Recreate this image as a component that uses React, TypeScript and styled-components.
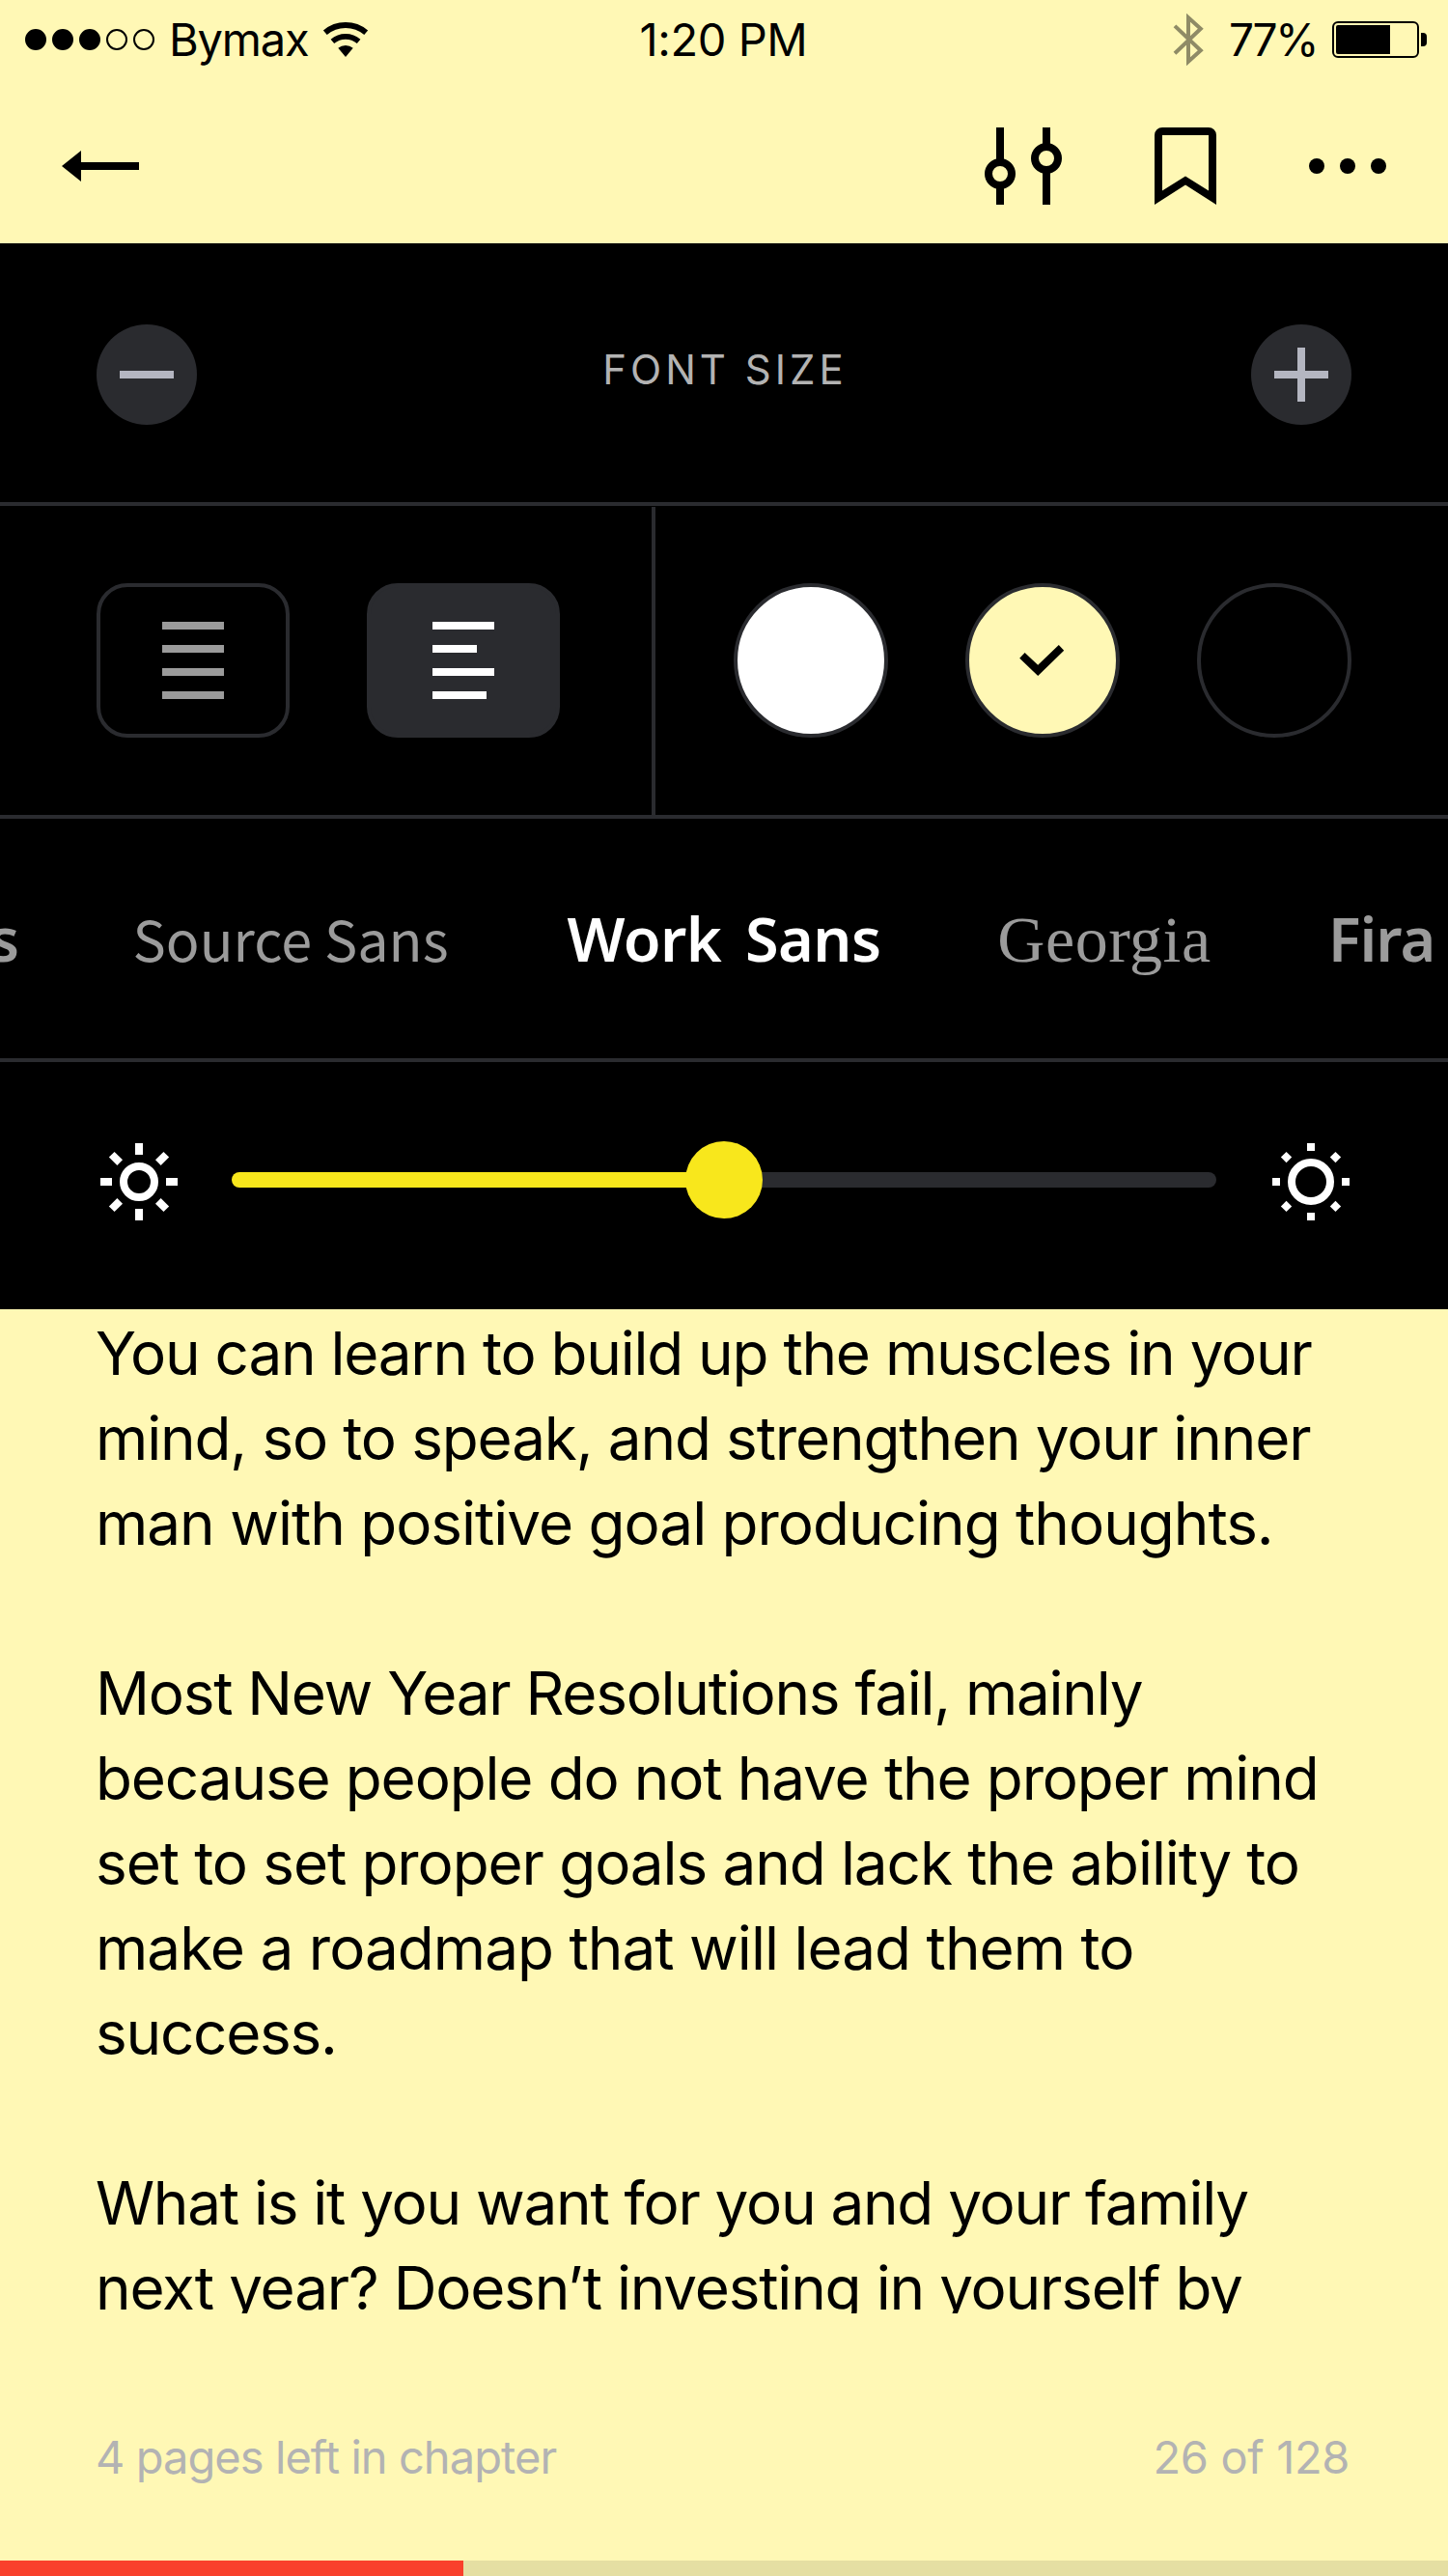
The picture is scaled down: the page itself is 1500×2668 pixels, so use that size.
import React from "react";
import styled, { createGlobalStyle } from "styled-components";

const PAPER = "#fff8b5";
const LINE = "#2a2b2f";
const YELLOW = "#f8e71c";

const GlobalStyle = createGlobalStyle`
  * { box-sizing: border-box; }
  body { margin: 0; background: ${PAPER}; }
  button { appearance: none; border: 0; padding: 0; background: none; color: inherit; font: inherit; }
  svg { display: block; flex: none; }
`;

const Screen = styled.div`
  display: flex;
  flex-direction: column;
  width: 1500px;
  height: 2668px;
  overflow: hidden;
  background: ${PAPER};
  color: #000;
  font-family: Inter, "Liberation Sans", sans-serif;
`;

/* Status bar */

const StatusBar = styled.header`
  display: grid;
  grid-template-columns: 1fr auto 1fr;
  align-items: center;
  height: 82px;
  padding: 0 22px 0 26px;
  font-size: 47px;
  line-height: 60px;
`;

const StatusGroup = styled.div<{ $end?: boolean }>`
  display: flex;
  align-items: center;
  justify-content: ${(p) => (p.$end ? "flex-end" : "flex-start")};
`;

const Signal = styled.div`
  display: flex;
  gap: 6px;
  margin-right: 15px;
`;

const SignalDot = styled.span<{ $on: boolean }>`
  width: 22px;
  height: 22px;
  border: 2px solid #000;
  border-radius: 50%;
  background: ${(p) => (p.$on ? "#000" : "transparent")};
`;

const Carrier = styled.span`
  width: 159px;
  letter-spacing: -1.2px;
`;

const Clock = styled.time`
  padding-right: 5px;
  letter-spacing: -0.4px;
`;

const Percent = styled.span`
  width: 107px;
  margin-left: 24px;
  font-size: 46px;
  letter-spacing: -2.4px;
`;

const Battery = styled.div`
  display: flex;
  align-items: center;
  gap: 2px;
`;

const BatteryCase = styled.div`
  width: 90px;
  height: 38px;
  padding: 2px;
  border: 2px solid #000;
  border-radius: 6px;
`;

const BatteryFill = styled.div`
  width: 56px;
  height: 30px;
  border-radius: 2px 0 0 2px;
  background: #000;
`;

const BatteryCap = styled.div`
  width: 6px;
  height: 14px;
  border-radius: 0 4px 4px 0;
  background: #000;
`;

/* Toolbar */

const Toolbar = styled.nav`
  display: flex;
  align-items: center;
  justify-content: space-between;
  height: 160px;
  margin-top: 10px;
  padding: 0 64px;
`;

const ToolbarActions = styled.div`
  display: flex;
  align-items: center;
  gap: 96px;
`;

/* Settings panel */

const Panel = styled.section`
  display: flex;
  flex-direction: column;
  height: 1104px;
  background: #000;
`;

const SizeRow = styled.div`
  display: flex;
  align-items: center;
  justify-content: space-between;
  height: 272px;
  padding: 4px 100px 0;
  border-bottom: 4px solid ${LINE};
`;

const RoundButton = styled.button`
  display: flex;
  align-items: center;
  justify-content: center;
  width: 104px;
  height: 104px;
  border-radius: 50%;
  background: ${LINE};
`;

const SizeLabel = styled.span`
  padding: 0 0 11px 2px;
  color: #b3b3b3;
  font-size: 42px;
  line-height: 50px;
  letter-spacing: 4px;
`;

const StyleRow = styled.div`
  display: flex;
  height: 324px;
  border-bottom: 4px solid ${LINE};
`;

const AlignGroup = styled.div`
  display: flex;
  align-items: center;
  gap: 80px;
  width: 679px;
  margin-top: 1px;
  padding: 0 0 1px 100px;
  border-right: 4px solid ${LINE};
`;

const AlignButton = styled.button<{ $active?: boolean }>`
  display: flex;
  flex-direction: column;
  justify-content: center;
  gap: 16px;
  width: 200px;
  height: 160px;
  padding-left: 64px;
  border: 4px solid ${LINE};
  border-radius: 32px;
  background: ${(p) => (p.$active ? LINE : "transparent")};
  color: ${(p) => (p.$active ? "#fff" : "#9b9b9b")};
`;

const AlignLine = styled.span<{ $width: number }>`
  width: ${(p) => p.$width}px;
  height: 8px;
  background: currentColor;
`;

const ThemeGroup = styled.div`
  display: flex;
  flex: 1;
  align-items: center;
  justify-content: flex-end;
  gap: 80px;
  padding-right: 100px;
`;

const Swatch = styled.button<{ $color: string }>`
  display: flex;
  align-items: center;
  justify-content: center;
  width: 160px;
  height: 160px;
  border: 4px solid ${LINE};
  border-radius: 50%;
  background: ${(p) => p.$color};
`;

const FontRow = styled.div`
  display: flex;
  align-items: baseline;
  height: 252px;
  padding-top: 83px;
  border-bottom: 4px solid ${LINE};
  overflow: hidden;
  line-height: 80px;
  white-space: nowrap;
`;

const FontOption = styled.span<{
  $family: string;
  $size: number;
  $lead: number;
  $weight?: number;
  $active?: boolean;
  $tracking?: number;
  $wordGap?: number;
}>`
  flex: none;
  margin-left: ${(p) => p.$lead}px;
  color: ${(p) => (p.$active ? "#fff" : "#9b9b9b")};
  font-family: ${(p) => p.$family};
  font-size: ${(p) => p.$size}px;
  font-weight: ${(p) => p.$weight ?? 400};
  letter-spacing: ${(p) => p.$tracking ?? 0}px;
  word-spacing: ${(p) => p.$wordGap ?? 0}px;
`;

const BrightnessRow = styled.div`
  display: flex;
  align-items: center;
  justify-content: space-between;
  height: 256px;
  padding: 0 102px 8px 104px;
`;

const Slider = styled.div`
  display: flex;
  align-items: center;
  width: 1020px;
  margin: 0 2px 4px 0;
`;

const TrackFilled = styled.div`
  flex: 1;
  height: 16px;
  margin-right: -4px;
  border-radius: 8px 0 0 8px;
  background: ${YELLOW};
`;

const TrackRest = styled.div`
  flex: 1;
  height: 16px;
  margin-left: -4px;
  border-radius: 0 8px 8px 0;
  background: ${LINE};
`;

const Thumb = styled.div`
  z-index: 1;
  width: 80px;
  height: 80px;
  border-radius: 50%;
  background: ${YELLOW};
`;

/* Page */

const Article = styled.main`
  height: 1040px;
  padding: 2px 0 0 99px;
  overflow: hidden;
  font-size: 62px;
  line-height: 88px;
`;

const Paragraph = styled.p`
  margin: 0 0 88px;
`;

const TextLine = styled.span<{ $tracking: number }>`
  display: block;
  letter-spacing: ${(p) => p.$tracking}px;
  white-space: nowrap;
`;

const Footer = styled.footer`
  display: flex;
  justify-content: space-between;
  height: 256px;
  padding: 119px 102px 0 99px;
  color: #b3b3b3;
  font-size: 47px;
  line-height: 60px;
`;

const FooterText = styled.span<{ $tracking: number }>`
  letter-spacing: ${(p) => p.$tracking}px;
`;

const Progress = styled.div`
  height: 16px;
  background: #e5dfa3;
`;

const ProgressFill = styled.div`
  width: 32%;
  height: 100%;
  background: #f9402c;
`;

const WifiIcon = () => (
  <svg width="48" height="38" viewBox="-24 -37 48 38" fill="none" stroke="#000">
    <path d="M-21.2 -25.3A33 33 0 0 1 21.2 -25.3" strokeWidth="6" />
    <path d="M-13.6 -16.2A21.2 21.2 0 0 1 13.6 -16.2" strokeWidth="5.6" />
    <path d="M0 0L-7.7 -9.2A12 12 0 0 1 7.7 -9.2Z" fill="#000" stroke="none" />
  </svg>
);

const BluetoothIcon = () => (
  <svg width="34" height="54" viewBox="0 0 34 54" fill="none" stroke="#8f8b66" strokeWidth="4">
    <path d="M2 12.9L28.8 38.3L16 49.8V4.2L28.8 15.7L2 41.2" />
  </svg>
);

const BackIcon = () => (
  <svg width="80" height="32" viewBox="0 0 80 32">
    <path d="M0 16L20 0V12H80V20H20V32Z" />
  </svg>
);

const SlidersIcon = () => (
  <svg width="80" height="80" viewBox="0 0 80 80" fill="none" stroke="#000" strokeWidth="8">
    <path d="M16 0V36M16 60V80M64 0V20M64 44V80" />
    <circle cx="16" cy="48" r="12" />
    <circle cx="64" cy="32" r="12" />
  </svg>
);

const BookmarkIcon = () => (
  <svg width="64" height="80" viewBox="0 0 64 80">
    <path
      fillRule="evenodd"
      d="M8 0H56A8 8 0 0 1 64 8V80L32 59.5L0 80V8A8 8 0 0 1 8 0ZM8 8V65.5L32 50.5L56 65.5V8Z"
    />
  </svg>
);

const MoreIcon = () => (
  <svg width="80" height="16" viewBox="0 0 80 16">
    <circle cx="8" cy="8" r="8" />
    <circle cx="40" cy="8" r="8" />
    <circle cx="72" cy="8" r="8" />
  </svg>
);

const MinusIcon = () => (
  <svg width="56" height="56" viewBox="0 0 56 56" stroke="#b4b6c1" strokeWidth="8">
    <path d="M0 28H56" />
  </svg>
);

const PlusIcon = () => (
  <svg width="56" height="56" viewBox="0 0 56 56" stroke="#b4b6c1" strokeWidth="8">
    <path d="M0 28H56M28 0V56" />
  </svg>
);

const CheckIcon = () => (
  <svg width="48" height="32" viewBox="0 0 48 32">
    <path d="M5.6 8L0.2 13.7L19.2 32L46.2 5.7L40.8 0L19.2 20.8Z" />
  </svg>
);

const SunIcon = ({ radius, ray }: { radius: number; ray: number }) => (
  <svg width="80" height="80" viewBox="-40 -40 80 80" fill="none" stroke="#fff" strokeWidth="8">
    <circle r={radius} />
    {[0, 45, 90, 135, 180, 225, 270, 315].map((a) => (
      <path key={a} d={`M0 -40V${ray - 40}`} transform={`rotate(${a})`} />
    ))}
  </svg>
);

const paragraphs: [string, number][][] = [
  [
    ["You can learn to build up the muscles in your", -1.25],
    ["mind, so to speak, and strengthen your inner", -1.14],
    ["man with positive goal producing thoughts.", -1.01],
  ],
  [
    ["Most New Year Resolutions fail, mainly", -1.26],
    ["because people do not have the proper mind", -1.14],
    ["set to set proper goals and lack the ability to", -1.09],
    ["make a roadmap that will lead them to", -0.97],
    ["success.", -1.25],
  ],
  [
    ["What is it you want for you and your family", -1.27],
    ["next year? Doesn’t investing in yourself by", -1.2],
  ],
];

const NOTO = '"Noto Sans", sans-serif';

export default function App() {
  return (
    <Screen>
      <GlobalStyle />
      <StatusBar>
        <StatusGroup>
          <Signal>
            {[true, true, true, false, false].map((on, i) => (
              <SignalDot key={i} $on={on} />
            ))}
          </Signal>
          <Carrier>Bymax</Carrier>
          <WifiIcon />
        </StatusGroup>
        <Clock>1:20 PM</Clock>
        <StatusGroup $end>
          <BluetoothIcon />
          <Percent>77%</Percent>
          <Battery>
            <BatteryCase>
              <BatteryFill />
            </BatteryCase>
            <BatteryCap />
          </Battery>
        </StatusGroup>
      </StatusBar>

      <Toolbar>
        <button aria-label="Back"><BackIcon /></button>
        <ToolbarActions>
          <button aria-label="Settings"><SlidersIcon /></button>
          <button aria-label="Bookmark"><BookmarkIcon /></button>
          <button aria-label="More"><MoreIcon /></button>
        </ToolbarActions>
      </Toolbar>

      <Panel>
        <SizeRow>
          <RoundButton aria-label="Smaller"><MinusIcon /></RoundButton>
          <SizeLabel>FONT SIZE</SizeLabel>
          <RoundButton aria-label="Larger"><PlusIcon /></RoundButton>
        </SizeRow>

        <StyleRow>
          <AlignGroup>
            <AlignButton aria-label="Justify">
              {[64, 64, 64, 64].map((w, i) => <AlignLine key={i} $width={w} />)}
            </AlignButton>
            <AlignButton $active aria-label="Align left">
              {[64, 46, 64, 56].map((w, i) => <AlignLine key={i} $width={w} />)}
            </AlignButton>
          </AlignGroup>
          <ThemeGroup>
            <Swatch $color="#fff" aria-label="White" />
            <Swatch $color={PAPER} aria-label="Sepia"><CheckIcon /></Swatch>
            <Swatch $color="#000" aria-label="Black" />
          </ThemeGroup>
        </StyleRow>

        <FontRow>
          <FontOption $family={NOTO} $size={63} $weight={600} $lead={-11}>s</FontOption>
          <FontOption $family={'"Noto Sans CJK SC", sans-serif'} $size={57.5} $lead={117.5}>Source Sans</FontOption>
          <FontOption $family={NOTO} $size={63} $weight={600} $lead={123} $tracking={-0.6} $wordGap={9} $active>
            Work Sans
          </FontOption>
          <FontOption $family={'"Liberation Serif", serif'} $size={68} $lead={121} $tracking={0.5}>Georgia</FontOption>
          <FontOption $family={NOTO} $size={63} $weight={600} $lead={121} $tracking={-1}>Fira</FontOption>
        </FontRow>

        <BrightnessRow>
          <SunIcon radius={16} ray={12} />
          <Slider>
            <TrackFilled />
            <Thumb />
            <TrackRest />
          </Slider>
          <SunIcon radius={20} ray={8} />
        </BrightnessRow>
      </Panel>

      <Article>
        {paragraphs.map((lines, i) => (
          <Paragraph key={i}>
            {lines.map(([text, tracking]) => (
              <TextLine key={text} $tracking={tracking}>{text}</TextLine>
            ))}
          </Paragraph>
        ))}
      </Article>

      <Footer>
        <FooterText $tracking={-0.94}>4 pages left in chapter</FooterText>
        <FooterText $tracking={-0.35}>26 of 128</FooterText>
      </Footer>
      <Progress>
        <ProgressFill />
      </Progress>
    </Screen>
  );
}
